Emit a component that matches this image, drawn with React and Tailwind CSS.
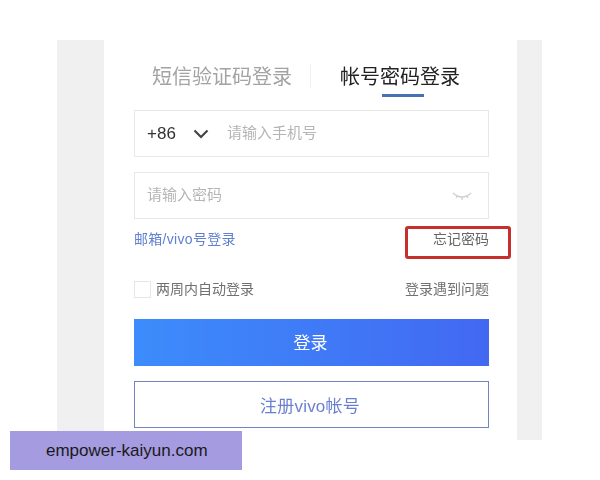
import React from "react";

const cjk = "font-['Liberation_Sans','Noto_Sans_CJK_SC',sans-serif]";

function EyeClosed() {
  return (
    <svg width="20" height="10" viewBox="0 0 20 10" fill="none" stroke="#cfcfcf" strokeWidth="1.3">
      <path d="M1 2c3 3 6 4 9 4s6-1 9-4" />
      <path d="M5 5l-1 2M10 6v3M15 5l1 2" />
    </svg>
  );
}

export default function App() {
  return (
    <div className={`relative w-[600px] h-[480px] overflow-hidden bg-white ${cjk}`}>
      <div className="pt-10 pl-[57px]">
        <div className="w-[485px] h-[400px] bg-[#f0f0f0] pl-[47px] pr-[25px]">
          <div className="h-full bg-white pl-[30px] pr-[28px] relative blur-[0.5px]">
            <div className="flex h-[70px] pt-6 pl-[18px]">
              <span className="text-[20px] leading-[26px] text-[#a3a3a3]">短信验证码登录</span>
              <span className="w-px h-6 bg-[#f0f0f0] ml-[18px] mr-[29px]"></span>
              <div className="flex flex-col items-start">
                <span className="text-[20px] leading-[26px] text-[#222222]">帐号密码登录</span>
                <span className="w-[42px] h-[3px] bg-[#4a6fb5] mt-1 ml-[42px]"></span>
              </div>
            </div>

            <div className="h-[47px] border border-[#e8e8e8] flex items-center pl-3">
              <span className="text-[17px] text-[#333333] w-[46px]">+86</span>
              <svg width="16" height="10" viewBox="0 0 16 10" fill="none" stroke="#444444" strokeWidth="2.2">
                <path d="M1.5 1.5L8 8l6.5-6.5" />
              </svg>
              <span className="ml-[18px] text-[15px] text-[#b5b5b5] -mt-[1px]">请输入手机号</span>
            </div>

            <div className="h-[47px] mt-[15px] border border-[#e8e8e8] flex items-center justify-between pl-3 pr-4">
              <span className="text-[15px] text-[#b5b5b5]">请输入密码</span>
              <EyeClosed />
            </div>

            <div className="h-[62px] flex justify-between pt-[11px] text-[14px] leading-[18px]">
              <span className="text-[#5f7fd0] tracking-[0.3px]">邮箱/vivo号登录</span>
              <span className="text-[#666666] relative">
                忘记密码
                <span className="absolute -left-[28px] -right-[22px] -top-[4px] h-[33px] border-[3px] border-[#c62f2c] rounded-[3px]"></span>
              </span>
            </div>

            <div className="flex items-center justify-between h-[17px] text-[14px] text-[#707070]">
              <div className="flex items-center gap-[5px]">
                <span className="w-[17px] h-[17px] border border-[#e6e6e6]"></span>
                <span>两周内自动登录</span>
              </div>
              <span>登录遇到问题</span>
            </div>

            <div className="h-[47px] mt-[21px] bg-gradient-to-r from-[#3c8cfb] to-[#4268f2] flex items-center justify-center text-white text-[17px] pt-[3px] pr-[2px]">
              登录
            </div>

            <div className="h-[47px] mt-[15px] border-[1.5px] border-[#7186bd] flex items-center justify-center text-[#6a7fd0] text-[17px] pt-[5px] pr-[3px] tracking-[0.2px]">
              注册vivo帐号
            </div>
          </div>
        </div>
      </div>

      <div className="absolute left-[10px] top-[431px] w-[232px] h-[39px] bg-[#a59be0] flex items-center pl-9 text-[17px] text-[#1a1a1a] font-['Liberation_Sans',sans-serif]">
        empower-kaiyun.com
      </div>
    </div>
  );
}
